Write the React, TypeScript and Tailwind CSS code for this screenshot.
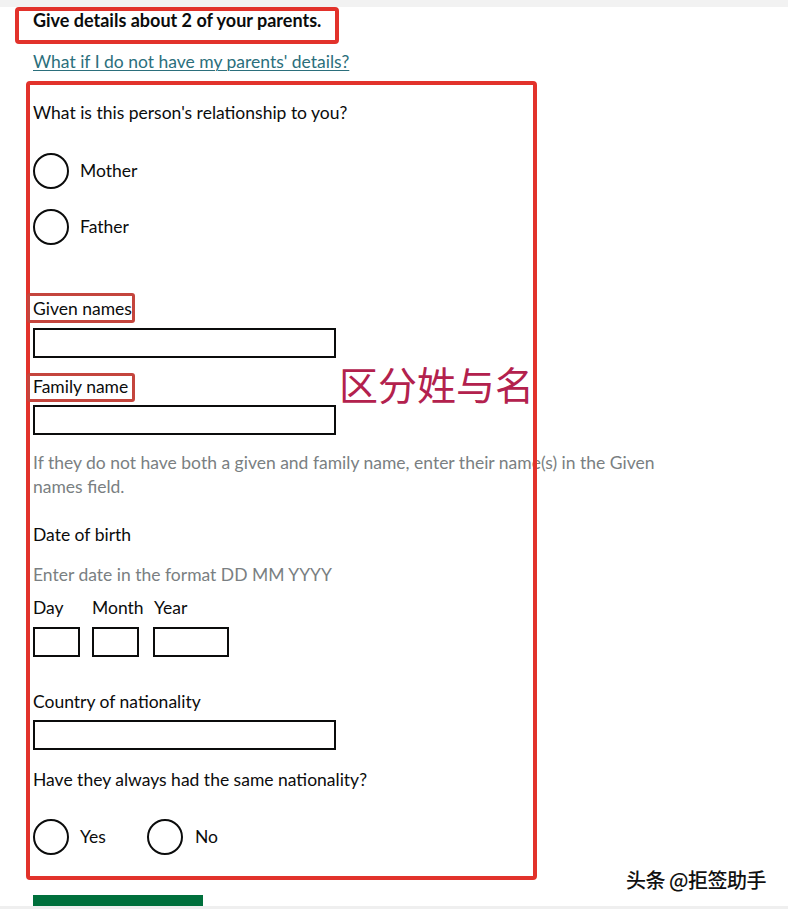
import React from "react";

const font = { fontFamily: "Lato, 'Noto Sans', sans-serif" };

function Radio({ label, labelGap = "ml-[11px]" }: { label: string; labelGap?: string }) {
  return (
    <div className="flex items-center">
      <span className="block w-[36px] h-[36px] rounded-full border-[2px] border-[#0b0c0c] bg-white" />
      <span className={`${labelGap} text-[17.5px] leading-[24px] text-[#0b0c0c]`}>{label}</span>
    </div>
  );
}

function TextInput({ w }: { w: string }) {
  return <div className={`${w} h-[30px] border-[2px] border-[#0b0c0c] bg-white`} />;
}

export default function App() {
  return (
    <div className="relative w-[788px] h-[909px] overflow-hidden bg-white text-[#0b0c0c]" style={font}>
      <div className="h-[7px] bg-[#f2f2f2]" />
      <div className="pl-[33px] flex flex-col items-start">
        <h2 className="mt-[1px] text-[18px] leading-[24px] font-bold">Give details about 2 of your parents.</h2>
        <a className="mt-[18px] text-[17.5px] leading-[24px] text-[#2b6f7c] underline underline-offset-2 decoration-1">
          What if I do not have my parents' details?
        </a>
        <p className="mt-[27px] text-[17.5px] leading-[24px]">What is this person's relationship to you?</p>
        <div className="mt-[28px]">
          <Radio label="Mother" />
        </div>
        <div className="mt-[20px]">
          <Radio label="Father" />
        </div>
        <label className="mt-[52px] text-[17.5px] leading-[24px]">Given names</label>
        <div className="mt-[7px]">
          <TextInput w="w-[303px]" />
        </div>
        <label className="mt-[17px] text-[17.5px] leading-[24px]">Family name</label>
        <div className="mt-[6px]">
          <TextInput w="w-[303px]" />
        </div>
        <p className="mt-[16px] text-[17.5px] leading-[24px] text-[#7a7f82] whitespace-nowrap">
          If they do not have both a given and family name, enter their name(s) in the Given
          <br />
          names field.
        </p>
        <p className="mt-[24px] text-[17.5px] leading-[24px]">Date of birth</p>
        <p className="mt-[16px] text-[17.5px] leading-[24px] text-[#7a7f82]">Enter date in the format DD MM YYYY</p>
        <div className="mt-[9px] flex items-start">
          <div className="w-[47px] flex flex-col">
            <span className="text-[17.5px] leading-[24px] whitespace-nowrap">Day</span>
            <div className="mt-[7px]"><TextInput w="w-[47px]" /></div>
          </div>
          <div className="ml-[12px] w-[47px] flex flex-col">
            <span className="text-[17.5px] leading-[24px] whitespace-nowrap">Month</span>
            <div className="mt-[7px]"><TextInput w="w-[47px]" /></div>
          </div>
          <div className="ml-[14px] w-[76px] flex flex-col">
            <span className="text-[17.5px] leading-[24px] pl-[1px] whitespace-nowrap">Year</span>
            <div className="mt-[7px]"><TextInput w="w-[76px]" /></div>
          </div>
        </div>
        <label className="mt-[33px] text-[17.5px] leading-[24px]">Country of nationality</label>
        <div className="mt-[6px]">
          <TextInput w="w-[303px]" />
        </div>
        <p className="mt-[18px] text-[17.5px] leading-[24px]">Have they always had the same nationality?</p>
        <div className="mt-[27px] flex items-center">
          <div className="w-[114px]">
            <Radio label="Yes" />
          </div>
          <Radio label="No" labelGap="ml-[12px]" />
        </div>
        <button className="mt-[40px] w-[170px] h-[40px] bg-[#00703c] text-white text-[17.5px] font-bold leading-[24px] pt-[9px] text-left pl-[14px] shadow-[0_2px_0_#002d18]">
          Save and continue
        </button>
      </div>

      {/* annotation overlays */}
      <div className="absolute left-[15px] top-[7px] w-[324px] h-[37px] border-[4px] border-[#e2322b] rounded-[4px] pointer-events-none" />
      <div className="absolute left-[26px] top-[81px] w-[511px] h-[799px] border-[4px] border-[#e2322b] rounded-[4px] pointer-events-none" />
      <div className="absolute left-[27px] top-[293px] w-[108px] h-[30px] border-[3px] border-[#c4453d] rounded-[3px] pointer-events-none" />
      <div className="absolute left-[27px] top-[373px] w-[108px] h-[29px] border-[3px] border-[#c4453d] rounded-[3px] pointer-events-none" />
      <div
        className="absolute left-[339px] top-[359px] text-[39px] leading-[48px] text-[#b3214d] whitespace-nowrap"
        style={{ fontFamily: "'Noto Sans CJK SC', sans-serif", textShadow: "0 0 2px #fff, 0 0 2px #fff" }}
      >
        区分姓与名
      </div>
      <div
        className="absolute left-[626px] top-[866px] text-[20px] leading-[28px] font-medium text-[#111] whitespace-nowrap tracking-[-0.5px]"
        style={{ fontFamily: "'Noto Sans CJK SC', sans-serif", textShadow: "0 0 1px #fff, 1px 1px 1px #fff" }}
      >
        头条 @拒签助手
      </div>
      <div className="absolute left-0 top-[906px] w-full h-[3px] bg-[#efefef]" />
    </div>
  );
}
